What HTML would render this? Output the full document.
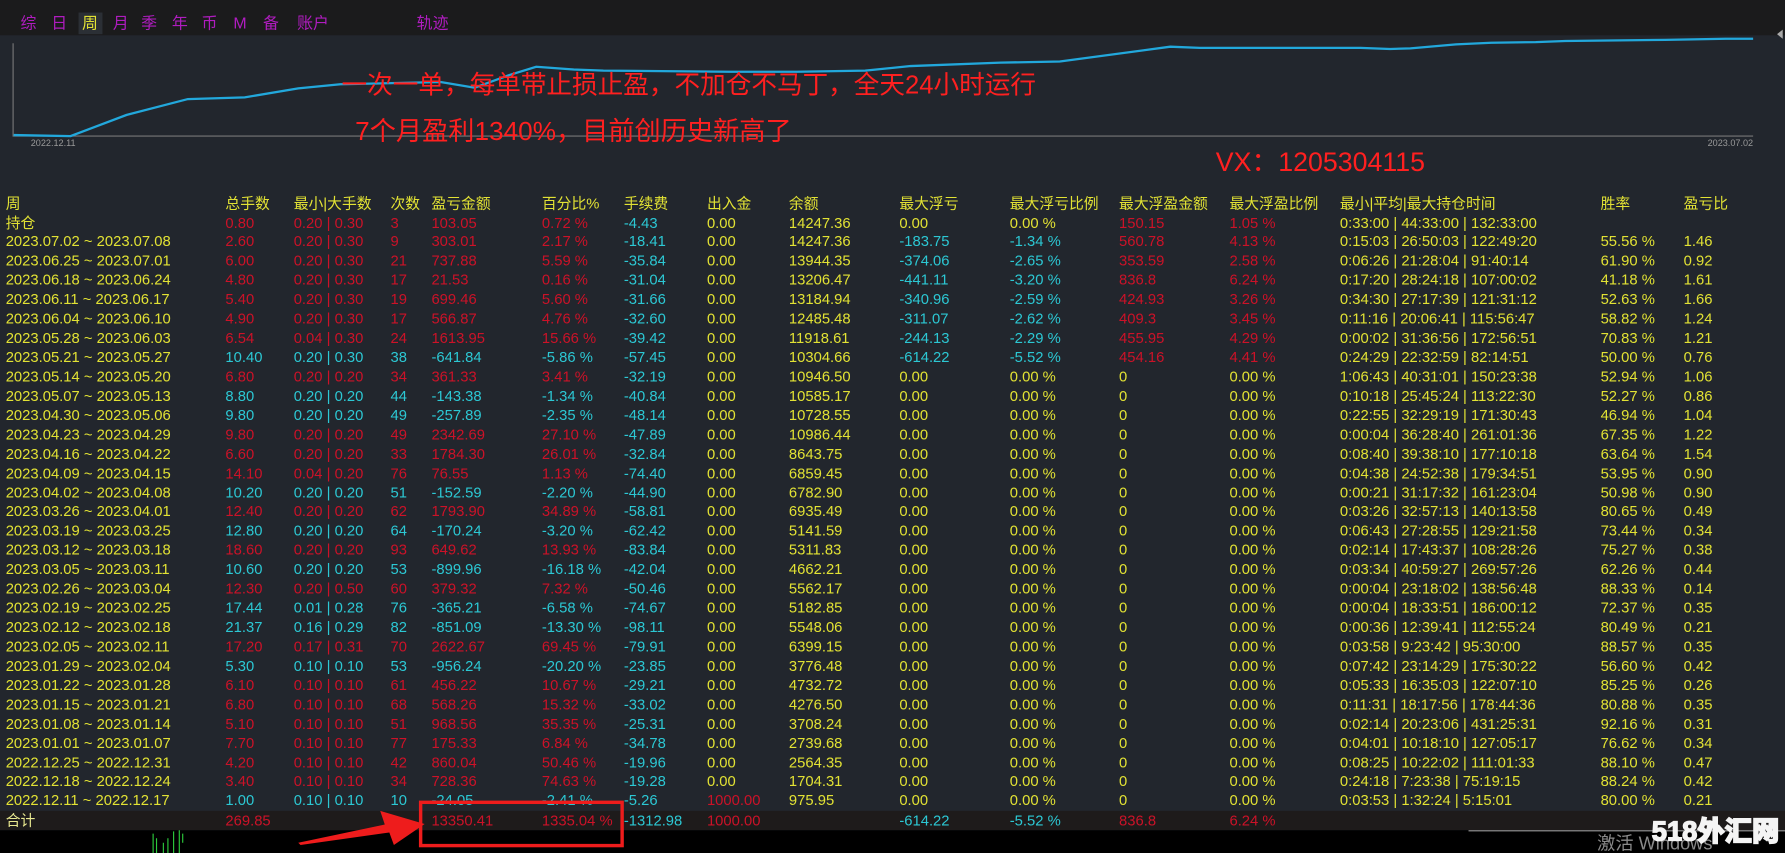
<!DOCTYPE html>
<html><head><meta charset="utf-8"><style>
html,body{margin:0;padding:0;background:#000;overflow:hidden}
body{width:1785px;height:853px;position:relative}
#w{position:absolute;left:0;top:0;width:1568px;height:749px;transform:scale(1.13839,1.13885);transform-origin:0 0;background:#22262d;font-family:"Liberation Sans","Noto Sans CJK SC",sans-serif;color:#e2e234}
#top{position:absolute;left:0;top:0;width:1568px;height:31px;background:#1b1b1c}
.tab{position:absolute;top:11px;font-size:14px;line-height:18px;color:#b01cc0}
#hl{position:absolute;left:69px;top:11px;width:21px;height:19px;background:#2b2f35}
.ann{position:absolute;color:#ff2020;font-size:22.5px;white-space:nowrap;line-height:26px}
.row{position:absolute;left:0;width:1568px;height:17px;font-size:13px;line-height:17px;white-space:nowrap}
.row span{position:absolute;top:0}
.row span:nth-child(1){left:5px}.row span:nth-child(2){left:198px}.row span:nth-child(3){left:258px}.row span:nth-child(4){left:343px}
.row span:nth-child(5){left:379px}.row span:nth-child(6){left:476px}.row span:nth-child(7){left:548px}.row span:nth-child(8){left:621px}
.row span:nth-child(9){left:693px}.row span:nth-child(10){left:790px}.row span:nth-child(11){left:887px}.row span:nth-child(12){left:983px}
.row span:nth-child(13){left:1080px}.row span:nth-child(14){left:1177px}.row span:nth-child(15){left:1406px}.row span:nth-child(16){left:1479px}
.R{color:#cc1228}.C{color:#2cc8d4}
#tot{position:absolute;left:0;top:712px;width:1568px;height:17px;background:#1e1b1b}
#bot{position:absolute;left:0;top:729px;width:1568px;height:20px;background:#000}
</style></head><body><div id="w">
<div id="top"></div><div id="hl"></div>
<div class="tab" style="left:18px">综</div><div class="tab" style="left:45px">日</div><div class="tab" style="left:72px;color:#e2e234">周</div><div class="tab" style="left:99px">月</div><div class="tab" style="left:124px">季</div><div class="tab" style="left:151px">年</div><div class="tab" style="left:177px">币</div><div class="tab" style="left:205px">M</div><div class="tab" style="left:231px">备</div><div class="tab" style="left:261px">账户</div><div class="tab" style="left:366px">轨迹</div>
<svg style="position:absolute;left:0;top:0" width="1568" height="140">
<line x1="11.5" y1="38" x2="11.5" y2="119" stroke="#777" stroke-width="1"/>
<line x1="11" y1="119.5" x2="1540" y2="119.5" stroke="#777" stroke-width="1"/>
<polyline fill="none" stroke="#22a8dc" stroke-width="2" points="12,118.6 62,119.5 111,101 165,87 215,85.5 262,77.6 299,74 387,72 417,77 447,66 471,58.6 504,61 530,62 640,63 700,63 760,62 800,58 879,55 931,54 1028,41 1054,42 1155,42 1195,42 1221,43 1239,42.5 1279,39 1310,37.5 1349,37 1375,36 1463,35 1516,34 1540,34"/>
<text x="27" y="128" font-size="8" fill="#999" font-family="Liberation Sans">2022.12.11</text>
<text x="1500" y="128" font-size="8" fill="#999" font-family="Liberation Sans">2023.07.02</text>
<polygon points="1566,26 1566,34 1561,30" fill="#aaa"/>
</svg>
<div class="ann" style="left:300px;top:62px">一次一单，每单带止损止盈，不加仓不马丁，全天24小时运行</div>
<div class="ann" style="left:312px;top:102px;font-size:23px">7个月盈利1340%，目前创历史新高了</div>
<div class="ann" style="left:1068px;top:129px;font-size:23.5px">VX：1205304115</div>
<div id="tot"></div><div id="bot"></div>
<div class="row" style="top:169.5px"><span>周</span><span>总手数</span><span>最小|大手数</span><span>次数</span><span>盈亏金额</span><span>百分比%</span><span>手续费</span><span>出入金</span><span>余额</span><span>最大浮亏</span><span>最大浮亏比例</span><span>最大浮盈金额</span><span>最大浮盈比例</span><span>最小|平均|最大持仓时间</span><span>胜率</span><span>盈亏比</span></div>
<div class="row" style="top:186.5px"><span>持仓</span><span class="R">0.80</span><span class="R">0.20 | 0.30</span><span class="R">3</span><span class="R">103.05</span><span class="R">0.72 %</span><span class="C">-4.43</span><span>0.00</span><span>14247.36</span><span>0.00</span><span>0.00 %</span><span class="R">150.15</span><span class="R">1.05 %</span><span>0:33:00 | 44:33:00 | 132:33:00</span><span></span><span></span></div>
<div class="row" style="top:203.4px"><span>2023.07.02 ~ 2023.07.08</span><span class="R">2.60</span><span class="R">0.20 | 0.30</span><span class="R">9</span><span class="R">303.01</span><span class="R">2.17 %</span><span class="C">-18.41</span><span>0.00</span><span>14247.36</span><span class="C">-183.75</span><span class="C">-1.34 %</span><span class="R">560.78</span><span class="R">4.13 %</span><span>0:15:03 | 26:50:03 | 122:49:20</span><span>55.56 %</span><span>1.46</span></div>
<div class="row" style="top:220.4px"><span>2023.06.25 ~ 2023.07.01</span><span class="R">6.00</span><span class="R">0.20 | 0.30</span><span class="R">21</span><span class="R">737.88</span><span class="R">5.59 %</span><span class="C">-35.84</span><span>0.00</span><span>13944.35</span><span class="C">-374.06</span><span class="C">-2.65 %</span><span class="R">353.59</span><span class="R">2.58 %</span><span>0:06:26 | 21:28:04 | 91:40:14</span><span>61.90 %</span><span>0.92</span></div>
<div class="row" style="top:237.3px"><span>2023.06.18 ~ 2023.06.24</span><span class="R">4.80</span><span class="R">0.20 | 0.30</span><span class="R">17</span><span class="R">21.53</span><span class="R">0.16 %</span><span class="C">-31.04</span><span>0.00</span><span>13206.47</span><span class="C">-441.11</span><span class="C">-3.20 %</span><span class="R">836.8</span><span class="R">6.24 %</span><span>0:17:20 | 28:24:18 | 107:00:02</span><span>41.18 %</span><span>1.61</span></div>
<div class="row" style="top:254.2px"><span>2023.06.11 ~ 2023.06.17</span><span class="R">5.40</span><span class="R">0.20 | 0.30</span><span class="R">19</span><span class="R">699.46</span><span class="R">5.60 %</span><span class="C">-31.66</span><span>0.00</span><span>13184.94</span><span class="C">-340.96</span><span class="C">-2.59 %</span><span class="R">424.93</span><span class="R">3.26 %</span><span>0:34:30 | 27:17:39 | 121:31:12</span><span>52.63 %</span><span>1.66</span></div>
<div class="row" style="top:271.2px"><span>2023.06.04 ~ 2023.06.10</span><span class="R">4.90</span><span class="R">0.20 | 0.30</span><span class="R">17</span><span class="R">566.87</span><span class="R">4.76 %</span><span class="C">-32.60</span><span>0.00</span><span>12485.48</span><span class="C">-311.07</span><span class="C">-2.62 %</span><span class="R">409.3</span><span class="R">3.45 %</span><span>0:11:16 | 20:06:41 | 115:56:47</span><span>58.82 %</span><span>1.24</span></div>
<div class="row" style="top:288.1px"><span>2023.05.28 ~ 2023.06.03</span><span class="R">6.54</span><span class="R">0.04 | 0.30</span><span class="R">24</span><span class="R">1613.95</span><span class="R">15.66 %</span><span class="C">-39.42</span><span>0.00</span><span>11918.61</span><span class="C">-244.13</span><span class="C">-2.29 %</span><span class="R">455.95</span><span class="R">4.29 %</span><span>0:00:02 | 31:36:56 | 172:56:51</span><span>70.83 %</span><span>1.21</span></div>
<div class="row" style="top:305.0px"><span>2023.05.21 ~ 2023.05.27</span><span class="C">10.40</span><span class="C">0.20 | 0.30</span><span class="C">38</span><span class="C">-641.84</span><span class="C">-5.86 %</span><span class="C">-57.45</span><span>0.00</span><span>10304.66</span><span class="C">-614.22</span><span class="C">-5.52 %</span><span class="R">454.16</span><span class="R">4.41 %</span><span>0:24:29 | 22:32:59 | 82:14:51</span><span>50.00 %</span><span>0.76</span></div>
<div class="row" style="top:321.9px"><span>2023.05.14 ~ 2023.05.20</span><span class="R">6.80</span><span class="R">0.20 | 0.20</span><span class="R">34</span><span class="R">361.33</span><span class="R">3.41 %</span><span class="C">-32.19</span><span>0.00</span><span>10946.50</span><span>0.00</span><span>0.00 %</span><span>0</span><span>0.00 %</span><span>1:06:43 | 40:31:01 | 150:23:38</span><span>52.94 %</span><span>1.06</span></div>
<div class="row" style="top:338.9px"><span>2023.05.07 ~ 2023.05.13</span><span class="C">8.80</span><span class="C">0.20 | 0.20</span><span class="C">44</span><span class="C">-143.38</span><span class="C">-1.34 %</span><span class="C">-40.84</span><span>0.00</span><span>10585.17</span><span>0.00</span><span>0.00 %</span><span>0</span><span>0.00 %</span><span>0:10:18 | 25:45:24 | 113:22:30</span><span>52.27 %</span><span>0.86</span></div>
<div class="row" style="top:355.8px"><span>2023.04.30 ~ 2023.05.06</span><span class="C">9.80</span><span class="C">0.20 | 0.20</span><span class="C">49</span><span class="C">-257.89</span><span class="C">-2.35 %</span><span class="C">-48.14</span><span>0.00</span><span>10728.55</span><span>0.00</span><span>0.00 %</span><span>0</span><span>0.00 %</span><span>0:22:55 | 32:29:19 | 171:30:43</span><span>46.94 %</span><span>1.04</span></div>
<div class="row" style="top:372.7px"><span>2023.04.23 ~ 2023.04.29</span><span class="R">9.80</span><span class="R">0.20 | 0.20</span><span class="R">49</span><span class="R">2342.69</span><span class="R">27.10 %</span><span class="C">-47.89</span><span>0.00</span><span>10986.44</span><span>0.00</span><span>0.00 %</span><span>0</span><span>0.00 %</span><span>0:00:04 | 36:28:40 | 261:01:36</span><span>67.35 %</span><span>1.22</span></div>
<div class="row" style="top:389.7px"><span>2023.04.16 ~ 2023.04.22</span><span class="R">6.60</span><span class="R">0.20 | 0.20</span><span class="R">33</span><span class="R">1784.30</span><span class="R">26.01 %</span><span class="C">-32.84</span><span>0.00</span><span>8643.75</span><span>0.00</span><span>0.00 %</span><span>0</span><span>0.00 %</span><span>0:08:40 | 39:38:10 | 177:10:18</span><span>63.64 %</span><span>1.54</span></div>
<div class="row" style="top:406.6px"><span>2023.04.09 ~ 2023.04.15</span><span class="R">14.10</span><span class="R">0.04 | 0.20</span><span class="R">76</span><span class="R">76.55</span><span class="R">1.13 %</span><span class="C">-74.40</span><span>0.00</span><span>6859.45</span><span>0.00</span><span>0.00 %</span><span>0</span><span>0.00 %</span><span>0:04:38 | 24:52:38 | 179:34:51</span><span>53.95 %</span><span>0.90</span></div>
<div class="row" style="top:423.5px"><span>2023.04.02 ~ 2023.04.08</span><span class="C">10.20</span><span class="C">0.20 | 0.20</span><span class="C">51</span><span class="C">-152.59</span><span class="C">-2.20 %</span><span class="C">-44.90</span><span>0.00</span><span>6782.90</span><span>0.00</span><span>0.00 %</span><span>0</span><span>0.00 %</span><span>0:00:21 | 31:17:32 | 161:23:04</span><span>50.98 %</span><span>0.90</span></div>
<div class="row" style="top:440.4px"><span>2023.03.26 ~ 2023.04.01</span><span class="R">12.40</span><span class="R">0.20 | 0.20</span><span class="R">62</span><span class="R">1793.90</span><span class="R">34.89 %</span><span class="C">-58.81</span><span>0.00</span><span>6935.49</span><span>0.00</span><span>0.00 %</span><span>0</span><span>0.00 %</span><span>0:03:26 | 32:57:13 | 140:13:58</span><span>80.65 %</span><span>0.49</span></div>
<div class="row" style="top:457.4px"><span>2023.03.19 ~ 2023.03.25</span><span class="C">12.80</span><span class="C">0.20 | 0.20</span><span class="C">64</span><span class="C">-170.24</span><span class="C">-3.20 %</span><span class="C">-62.42</span><span>0.00</span><span>5141.59</span><span>0.00</span><span>0.00 %</span><span>0</span><span>0.00 %</span><span>0:06:43 | 27:28:55 | 129:21:58</span><span>73.44 %</span><span>0.34</span></div>
<div class="row" style="top:474.3px"><span>2023.03.12 ~ 2023.03.18</span><span class="R">18.60</span><span class="R">0.20 | 0.20</span><span class="R">93</span><span class="R">649.62</span><span class="R">13.93 %</span><span class="C">-83.84</span><span>0.00</span><span>5311.83</span><span>0.00</span><span>0.00 %</span><span>0</span><span>0.00 %</span><span>0:02:14 | 17:43:37 | 108:28:26</span><span>75.27 %</span><span>0.38</span></div>
<div class="row" style="top:491.2px"><span>2023.03.05 ~ 2023.03.11</span><span class="C">10.60</span><span class="C">0.20 | 0.20</span><span class="C">53</span><span class="C">-899.96</span><span class="C">-16.18 %</span><span class="C">-42.04</span><span>0.00</span><span>4662.21</span><span>0.00</span><span>0.00 %</span><span>0</span><span>0.00 %</span><span>0:03:34 | 40:59:27 | 269:57:26</span><span>62.26 %</span><span>0.44</span></div>
<div class="row" style="top:508.2px"><span>2023.02.26 ~ 2023.03.04</span><span class="R">12.30</span><span class="R">0.20 | 0.50</span><span class="R">60</span><span class="R">379.32</span><span class="R">7.32 %</span><span class="C">-50.46</span><span>0.00</span><span>5562.17</span><span>0.00</span><span>0.00 %</span><span>0</span><span>0.00 %</span><span>0:00:04 | 23:18:02 | 138:56:48</span><span>88.33 %</span><span>0.14</span></div>
<div class="row" style="top:525.1px"><span>2023.02.19 ~ 2023.02.25</span><span class="C">17.44</span><span class="C">0.01 | 0.28</span><span class="C">76</span><span class="C">-365.21</span><span class="C">-6.58 %</span><span class="C">-74.67</span><span>0.00</span><span>5182.85</span><span>0.00</span><span>0.00 %</span><span>0</span><span>0.00 %</span><span>0:00:04 | 18:33:51 | 186:00:12</span><span>72.37 %</span><span>0.35</span></div>
<div class="row" style="top:542.0px"><span>2023.02.12 ~ 2023.02.18</span><span class="C">21.37</span><span class="C">0.16 | 0.29</span><span class="C">82</span><span class="C">-851.09</span><span class="C">-13.30 %</span><span class="C">-98.11</span><span>0.00</span><span>5548.06</span><span>0.00</span><span>0.00 %</span><span>0</span><span>0.00 %</span><span>0:00:36 | 12:39:41 | 112:55:24</span><span>80.49 %</span><span>0.21</span></div>
<div class="row" style="top:558.9px"><span>2023.02.05 ~ 2023.02.11</span><span class="R">17.20</span><span class="R">0.17 | 0.31</span><span class="R">70</span><span class="R">2622.67</span><span class="R">69.45 %</span><span class="C">-79.91</span><span>0.00</span><span>6399.15</span><span>0.00</span><span>0.00 %</span><span>0</span><span>0.00 %</span><span>0:03:58 | 9:23:42 | 95:30:00</span><span>88.57 %</span><span>0.35</span></div>
<div class="row" style="top:575.9px"><span>2023.01.29 ~ 2023.02.04</span><span class="C">5.30</span><span class="C">0.10 | 0.10</span><span class="C">53</span><span class="C">-956.24</span><span class="C">-20.20 %</span><span class="C">-23.85</span><span>0.00</span><span>3776.48</span><span>0.00</span><span>0.00 %</span><span>0</span><span>0.00 %</span><span>0:07:42 | 23:14:29 | 175:30:22</span><span>56.60 %</span><span>0.42</span></div>
<div class="row" style="top:592.8px"><span>2023.01.22 ~ 2023.01.28</span><span class="R">6.10</span><span class="R">0.10 | 0.10</span><span class="R">61</span><span class="R">456.22</span><span class="R">10.67 %</span><span class="C">-29.21</span><span>0.00</span><span>4732.72</span><span>0.00</span><span>0.00 %</span><span>0</span><span>0.00 %</span><span>0:05:33 | 16:35:03 | 122:07:10</span><span>85.25 %</span><span>0.26</span></div>
<div class="row" style="top:609.7px"><span>2023.01.15 ~ 2023.01.21</span><span class="R">6.80</span><span class="R">0.10 | 0.10</span><span class="R">68</span><span class="R">568.26</span><span class="R">15.32 %</span><span class="C">-33.02</span><span>0.00</span><span>4276.50</span><span>0.00</span><span>0.00 %</span><span>0</span><span>0.00 %</span><span>0:11:31 | 18:17:56 | 178:44:36</span><span>80.88 %</span><span>0.35</span></div>
<div class="row" style="top:626.6px"><span>2023.01.08 ~ 2023.01.14</span><span class="R">5.10</span><span class="R">0.10 | 0.10</span><span class="R">51</span><span class="R">968.56</span><span class="R">35.35 %</span><span class="C">-25.31</span><span>0.00</span><span>3708.24</span><span>0.00</span><span>0.00 %</span><span>0</span><span>0.00 %</span><span>0:02:14 | 20:23:06 | 431:25:31</span><span>92.16 %</span><span>0.31</span></div>
<div class="row" style="top:643.6px"><span>2023.01.01 ~ 2023.01.07</span><span class="R">7.70</span><span class="R">0.10 | 0.10</span><span class="R">77</span><span class="R">175.33</span><span class="R">6.84 %</span><span class="C">-34.78</span><span>0.00</span><span>2739.68</span><span>0.00</span><span>0.00 %</span><span>0</span><span>0.00 %</span><span>0:04:01 | 10:18:10 | 127:05:17</span><span>76.62 %</span><span>0.34</span></div>
<div class="row" style="top:660.5px"><span>2022.12.25 ~ 2022.12.31</span><span class="R">4.20</span><span class="R">0.10 | 0.10</span><span class="R">42</span><span class="R">860.04</span><span class="R">50.46 %</span><span class="C">-19.96</span><span>0.00</span><span>2564.35</span><span>0.00</span><span>0.00 %</span><span>0</span><span>0.00 %</span><span>0:08:25 | 10:22:02 | 111:01:33</span><span>88.10 %</span><span>0.47</span></div>
<div class="row" style="top:677.4px"><span>2022.12.18 ~ 2022.12.24</span><span class="R">3.40</span><span class="R">0.10 | 0.10</span><span class="R">34</span><span class="R">728.36</span><span class="R">74.63 %</span><span class="C">-19.28</span><span>0.00</span><span>1704.31</span><span>0.00</span><span>0.00 %</span><span>0</span><span>0.00 %</span><span>0:24:18 | 7:23:38 | 75:19:15</span><span>88.24 %</span><span>0.42</span></div>
<div class="row" style="top:694.4px"><span>2022.12.11 ~ 2022.12.17</span><span class="C">1.00</span><span class="C">0.10 | 0.10</span><span class="C">10</span><span class="C">-24.05</span><span class="C">-2.41 %</span><span class="C">-5.26</span><span class="R">1000.00</span><span>975.95</span><span>0.00</span><span>0.00 %</span><span>0</span><span>0.00 %</span><span>0:03:53 | 1:32:24 | 5:15:01</span><span>80.00 %</span><span>0.21</span></div>
<div class="row" style="top:711.5px"><span style="color:#e8e890">合计</span><span class="R">269.85</span><span></span><span></span><span class="R">13350.41</span><span class="R">1335.04 %</span><span class="C">-1312.98</span><span class="R">1000.00</span><span></span><span class="C">-614.22</span><span class="C">-5.52 %</span><span class="R">836.8</span><span class="R">6.24 %</span><span></span><span></span><span></span></div>
<svg style="position:absolute;left:0;top:700px" width="1568" height="49">
<rect x="369.5" y="4.5" width="177" height="38" fill="none" stroke="#ee1c1c" stroke-width="3"/>
<polygon points="262,40 338,24 334,12 373,23.5 346,42 342,31 264,42" fill="#ee1c1c"/>
<g stroke="#2ccc3c" stroke-width="1">
<line x1="134.5" y1="32" x2="134.5" y2="49"/><line x1="137.5" y1="36" x2="137.5" y2="49"/><line x1="143.5" y1="40" x2="143.5" y2="49"/><line x1="147.5" y1="36" x2="147.5" y2="49"/><line x1="152.5" y1="30" x2="152.5" y2="49"/><line x1="157.5" y1="29" x2="157.5" y2="49"/><line x1="160.5" y1="32" x2="160.5" y2="40"/>
</g>
<line x1="1290" y1="29.5" x2="1568" y2="29.5" stroke="#999" stroke-width="1"/>
<text x="1403" y="46" font-size="16" fill="#8a8a8a" font-family="Liberation Sans,Noto Sans CJK SC,sans-serif">激活 Windows</text>
<text x="1451" y="38" font-size="24" font-weight="900" fill="#f4f4f4" stroke="#f4f4f4" stroke-width="1.2" paint-order="stroke" font-family="Liberation Sans,Noto Sans CJK SC,sans-serif">518外汇网</text>
</svg>
</div></body></html>
